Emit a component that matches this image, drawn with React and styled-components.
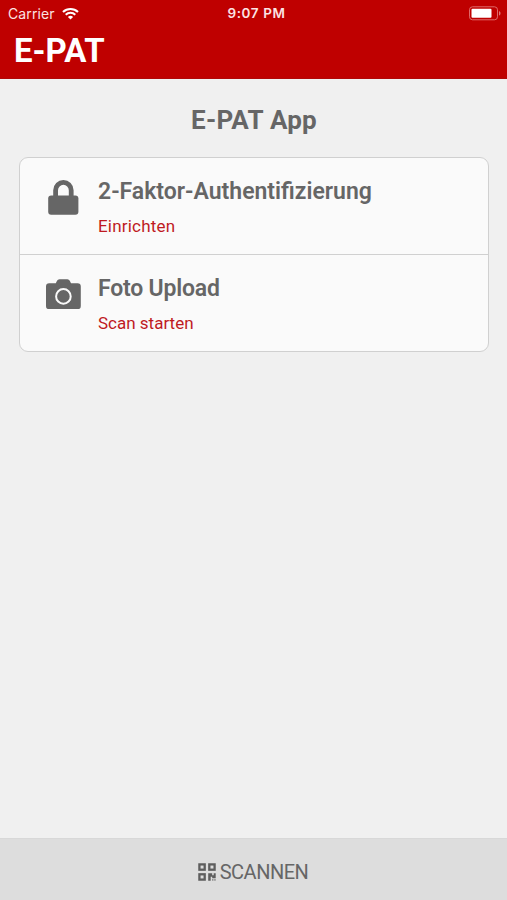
import styled, { createGlobalStyle } from "styled-components";

const GlobalStyle = createGlobalStyle`
  * {
    box-sizing: border-box;
  }

  body {
    margin: 0;
    background: #f0f0f0;
    font-family: Roboto, "Liberation Sans", sans-serif;
  }
`;

const Screen = styled.div`
  display: flex;
  flex-direction: column;
  height: 100vh;
  overflow: hidden;
  color: #666;
`;

const TopBar = styled.header`
  height: 79px;
  background: #bf0000;
  border-bottom: 1px solid #b00808;
  color: #fff;
`;

const StatusBar = styled.div`
  display: grid;
  grid-template-columns: 1fr auto 1fr;
  align-items: center;
  height: 27px;
  padding: 0 6px 0 8px;
  color: #fbe3e3;
  font-family: Inter, sans-serif;
  font-size: 14px;
  line-height: 27px;
`;

const Carrier = styled.div`
  display: flex;
  align-items: center;
  gap: 7px;
  letter-spacing: 0.1px;
`;

const Time = styled.div`
  padding-left: 4px;
  font-size: 13.5px;
  font-weight: 600;
  letter-spacing: 0.6px;
`;

const Battery = styled.svg`
  justify-self: end;
`;

const AppName = styled.div`
  padding-left: 14px;
  font-size: 33px;
  font-weight: 700;
  line-height: 47px;
`;

const Content = styled.main`
  flex: 1;
  padding: 0 18px 0 19px;
`;

const Title = styled.h1`
  margin: 0;
  padding-top: 21px;
  height: 78px;
  font-size: 26px;
  font-weight: 700;
  line-height: 40px;
  letter-spacing: 0.25px;
  text-align: center;
`;

const Card = styled.div`
  border: 1px solid #d0d0d0;
  border-radius: 9px;
  background: #fafafa;
  overflow: hidden;
`;

const Row = styled.div`
  display: flex;
  height: 96px;
  padding: 17px 0 0 21px;

  & + & {
    height: 97px;
    border-top: 1px solid #d0d0d0;
  }
`;

const IconBox = styled.div`
  display: flex;
  justify-content: center;
  width: 44px;
  margin-right: 13px;
  padding-top: ${(props) => props.$top}px;
`;

const RowTitle = styled.div`
  padding-top: 1px;
  font-size: 23px;
  font-weight: 600;
  line-height: 32px;
  letter-spacing: ${(props) => props.$spacing || 0}px;
`;

const RowAction = styled.div`
  margin-top: 7px;
  color: #bf1a1f;
  font-size: 17px;
  line-height: 22px;
  letter-spacing: ${(props) => props.$spacing || 0}px;
`;

const ScanButton = styled.button`
  display: flex;
  align-items: center;
  justify-content: center;
  gap: 4px;
  height: 62px;
  padding: 4px 1px 0 0;
  border: 0;
  border-top: 1px solid #d8d8d8;
  background: #ddd;
  color: #666;
  font: 400 20px Roboto, sans-serif;
  letter-spacing: -0.5px;
`;

function WifiIcon() {
  return (
    <svg width="17" height="13" viewBox="0 0 17 13" fill="none" stroke="#fff">
      <path d="M1 5a10.8 10.8 0 0 1 15 0" strokeWidth="2.1" />
      <path d="M3.7 7.8a6.9 6.9 0 0 1 9.6 0" strokeWidth="2" />
      <path d="M8.5 12.6 5.9 10a3.7 3.7 0 0 1 5.2 0z" fill="#fff" stroke="none" />
    </svg>
  );
}

function BatteryIcon() {
  return (
    <Battery width="33" height="15" viewBox="0 0 33 15">
      <rect x="1.5" y="0.8" width="28" height="13" rx="3" fill="none" stroke="#df6a6a" />
      <rect x="3.5" y="2.8" width="20" height="9" rx="1" fill="#fff" />
      <path d="M31 5v4.6c2-.8 2-3.8 0-4.6z" fill="#df7777" />
    </Battery>
  );
}

function LockIcon() {
  return (
    <svg width="31" height="35" viewBox="0 0 31 35">
      <path d="M7.6 18V10.2a7.8 7.8 0 0 1 15.6 0V18" fill="none" stroke="#666" strokeWidth="4.8" />
      <rect x="0.2" y="15.4" width="30.2" height="19.4" rx="3" fill="#666" />
    </svg>
  );
}

function CameraIcon() {
  return (
    <svg width="35" height="31" viewBox="0 0 35 31">
      <path
        d="M3.2 4.3h6.6l1.2-2.6Q11.8.2 13.4.2h8q1.6 0 2.4 1.5L25 4.3h6.6q3.2 0 3.2 3.2v19.4q0 3.2-3.2 3.2H3.2Q0 30.1 0 26.9V7.5q0-3.2 3.2-3.2z"
        fill="#666"
      />
      <circle cx="17.4" cy="17.4" r="7.3" fill="none" stroke="#fafafa" strokeWidth="2" />
    </svg>
  );
}

function QrIcon() {
  return (
    <svg width="18" height="18" viewBox="0 0 18 18" fill="#5e5e5e">
      <g fill="none" stroke="#5e5e5e" strokeWidth="2.3">
        <rect x="1.4" y="1.4" width="5.3" height="5.3" />
        <rect x="11.3" y="1.4" width="5.3" height="5.3" />
        <rect x="1.4" y="11.3" width="5.3" height="5.3" />
      </g>
      <path d="M10.2 10.2h4v2h1.5v-2h2v5h-3.5v-1.5h-1.5v4h-2.5z" />
      <path d="M14 16h1.5v1.7H14zM16.2 16h1.5v1.7h-1.5z" opacity="0.6" />
    </svg>
  );
}

function App() {
  return (
    <Screen>
      <GlobalStyle />
      <TopBar>
        <StatusBar>
          <Carrier>
            Carrier
            <WifiIcon />
          </Carrier>
          <Time>9:07 PM</Time>
          <BatteryIcon />
        </StatusBar>
        <AppName>E-PAT</AppName>
      </TopBar>

      <Content>
        <Title>E-PAT App</Title>
        <Card>
          <Row>
            <IconBox $top={5}>
              <LockIcon />
            </IconBox>
            <div>
              <RowTitle>2-Faktor-Authentifizierung</RowTitle>
              <RowAction $spacing={0.2}>Einrichten</RowAction>
            </div>
          </Row>
          <Row>
            <IconBox $top={7}>
              <CameraIcon />
            </IconBox>
            <div>
              <RowTitle $spacing={-0.2}>Foto Upload</RowTitle>
              <RowAction>Scan starten</RowAction>
            </div>
          </Row>
        </Card>
      </Content>

      <ScanButton>
        <QrIcon />
        SCANNEN
      </ScanButton>
    </Screen>
  );
}

export default App;
